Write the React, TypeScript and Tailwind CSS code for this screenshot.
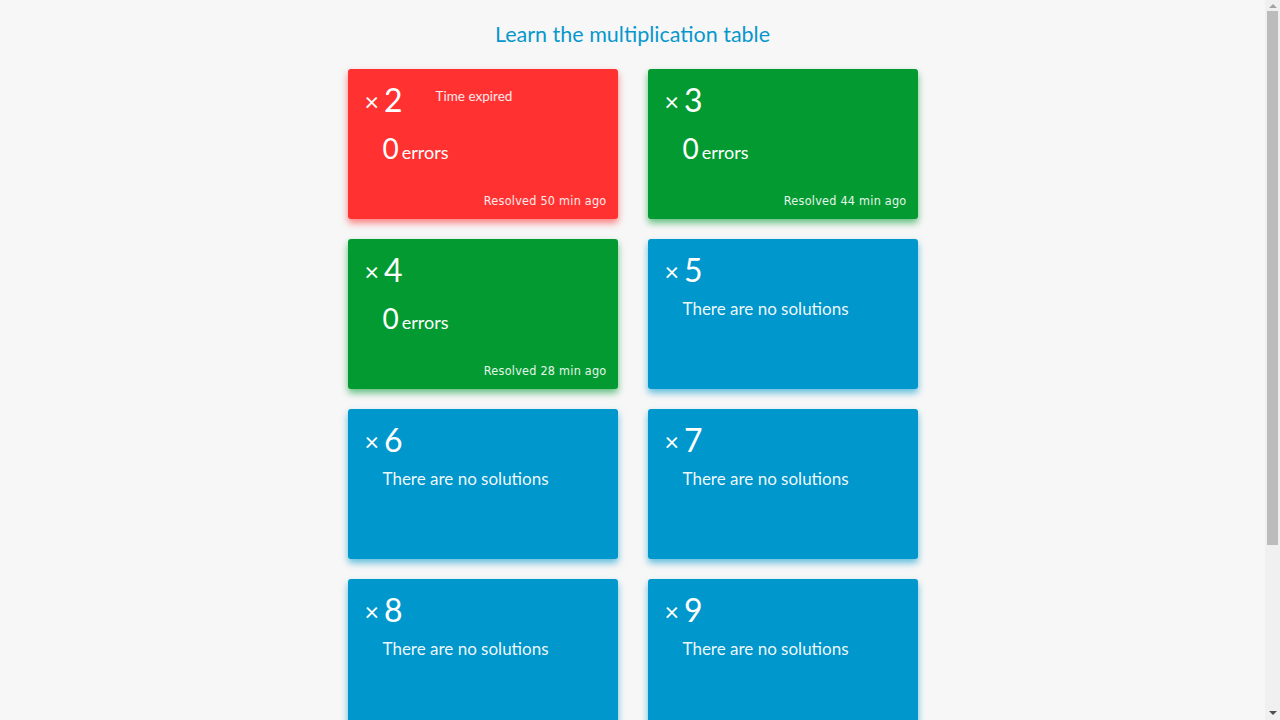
import React from "react";

type Tabla = {
  n: number;
  estado: "rojo" | "verde" | "azul";
  resuelto?: number;
  expirado?: boolean;
};

const tablas: Tabla[] = [
  { n: 2, estado: "rojo", resuelto: 50, expirado: true },
  { n: 3, estado: "verde", resuelto: 44 },
  { n: 4, estado: "verde", resuelto: 28 },
  { n: 5, estado: "azul" },
  { n: 6, estado: "azul" },
  { n: 7, estado: "azul" },
  { n: 8, estado: "azul" },
  { n: 9, estado: "azul" },
  { n: 10, estado: "azul" },
];

const estilos = {
  rojo: "bg-[#ff3131] shadow-[0_4px_7px_rgba(255,49,49,0.6)]",
  verde: "bg-[#029a31] shadow-[0_4px_7px_rgba(2,154,49,0.6)]",
  azul: "bg-[#0097cc] shadow-[0_4px_7px_rgba(0,151,204,0.6)]",
};

function Tarjeta({ t }: { t: Tabla }) {
  return (
    <div
      className={`flex h-[150px] flex-col rounded-[3px] pl-[17px] pr-[11px] pt-[15px] pb-[12px] text-white ${estilos[t.estado]}`}
    >
      <div className="flex items-start">
        <div className="flex items-baseline leading-none">
          <span className="relative -top-[1px] text-[25px]">×</span>
          <span className="ml-[5px] text-[32px]">{t.n}</span>
        </div>
        {t.expirado && (
          <span className="ml-[33px] mt-[6px] text-[13.5px] leading-none text-white/90">
            Time expired
          </span>
        )}
      </div>
      {t.resuelto != null ? (
        <>
          <div className="ml-[18px] mt-[18px] flex items-baseline leading-none">
            <span className="text-[28px]">0</span>
            <span className="ml-[3px] text-[18px]">errors</span>
          </div>
          <div className="mt-auto text-right font-['DejaVu_Sans_Condensed',sans-serif] text-[12.5px] leading-none tracking-[0.02em] text-white/90">
            Resolved {t.resuelto} min ago
          </div>
        </>
      ) : (
        <div className="ml-[18px] mt-[14px] text-[17px] leading-none text-white/95">
          There are no solutions
        </div>
      )}
    </div>
  );
}

// barra de desplazamiento dibujada (el navegador sin cabeza no la muestra)
function Barra() {
  return (
    <div className="flex w-[15px] shrink-0 flex-col items-center bg-[#f0f0f0]">
      <div className="mt-[4px] h-0 w-0 border-x-[4px] border-b-[4px] border-x-transparent border-b-[#a3a3a3]" />
      <div className="mt-[3px] h-[534px] w-[11px] bg-[#bcbcbc]" />
      <div className="mt-auto mb-[5px] h-0 w-0 border-x-[4px] border-t-[4px] border-x-transparent border-t-[#505050]" />
    </div>
  );
}

export default function App() {
  return (
    <div className="flex h-screen bg-[#f7f7f7] font-['Lato',sans-serif]">
      <div className="flex-1 overflow-hidden pb-[30px]">
        <h1 className="pt-[20px] pb-[20px] text-center text-[21.5px] leading-[29px] text-[#0897cc]">
          Learn the multiplication table
        </h1>
        <div className="mx-auto grid w-[570px] grid-cols-[270px_270px] gap-x-[30px] gap-y-[20px]">
          {tablas.map((t) => (
            <Tarjeta key={t.n} t={t} />
          ))}
        </div>
      </div>
      <Barra />
    </div>
  );
}
